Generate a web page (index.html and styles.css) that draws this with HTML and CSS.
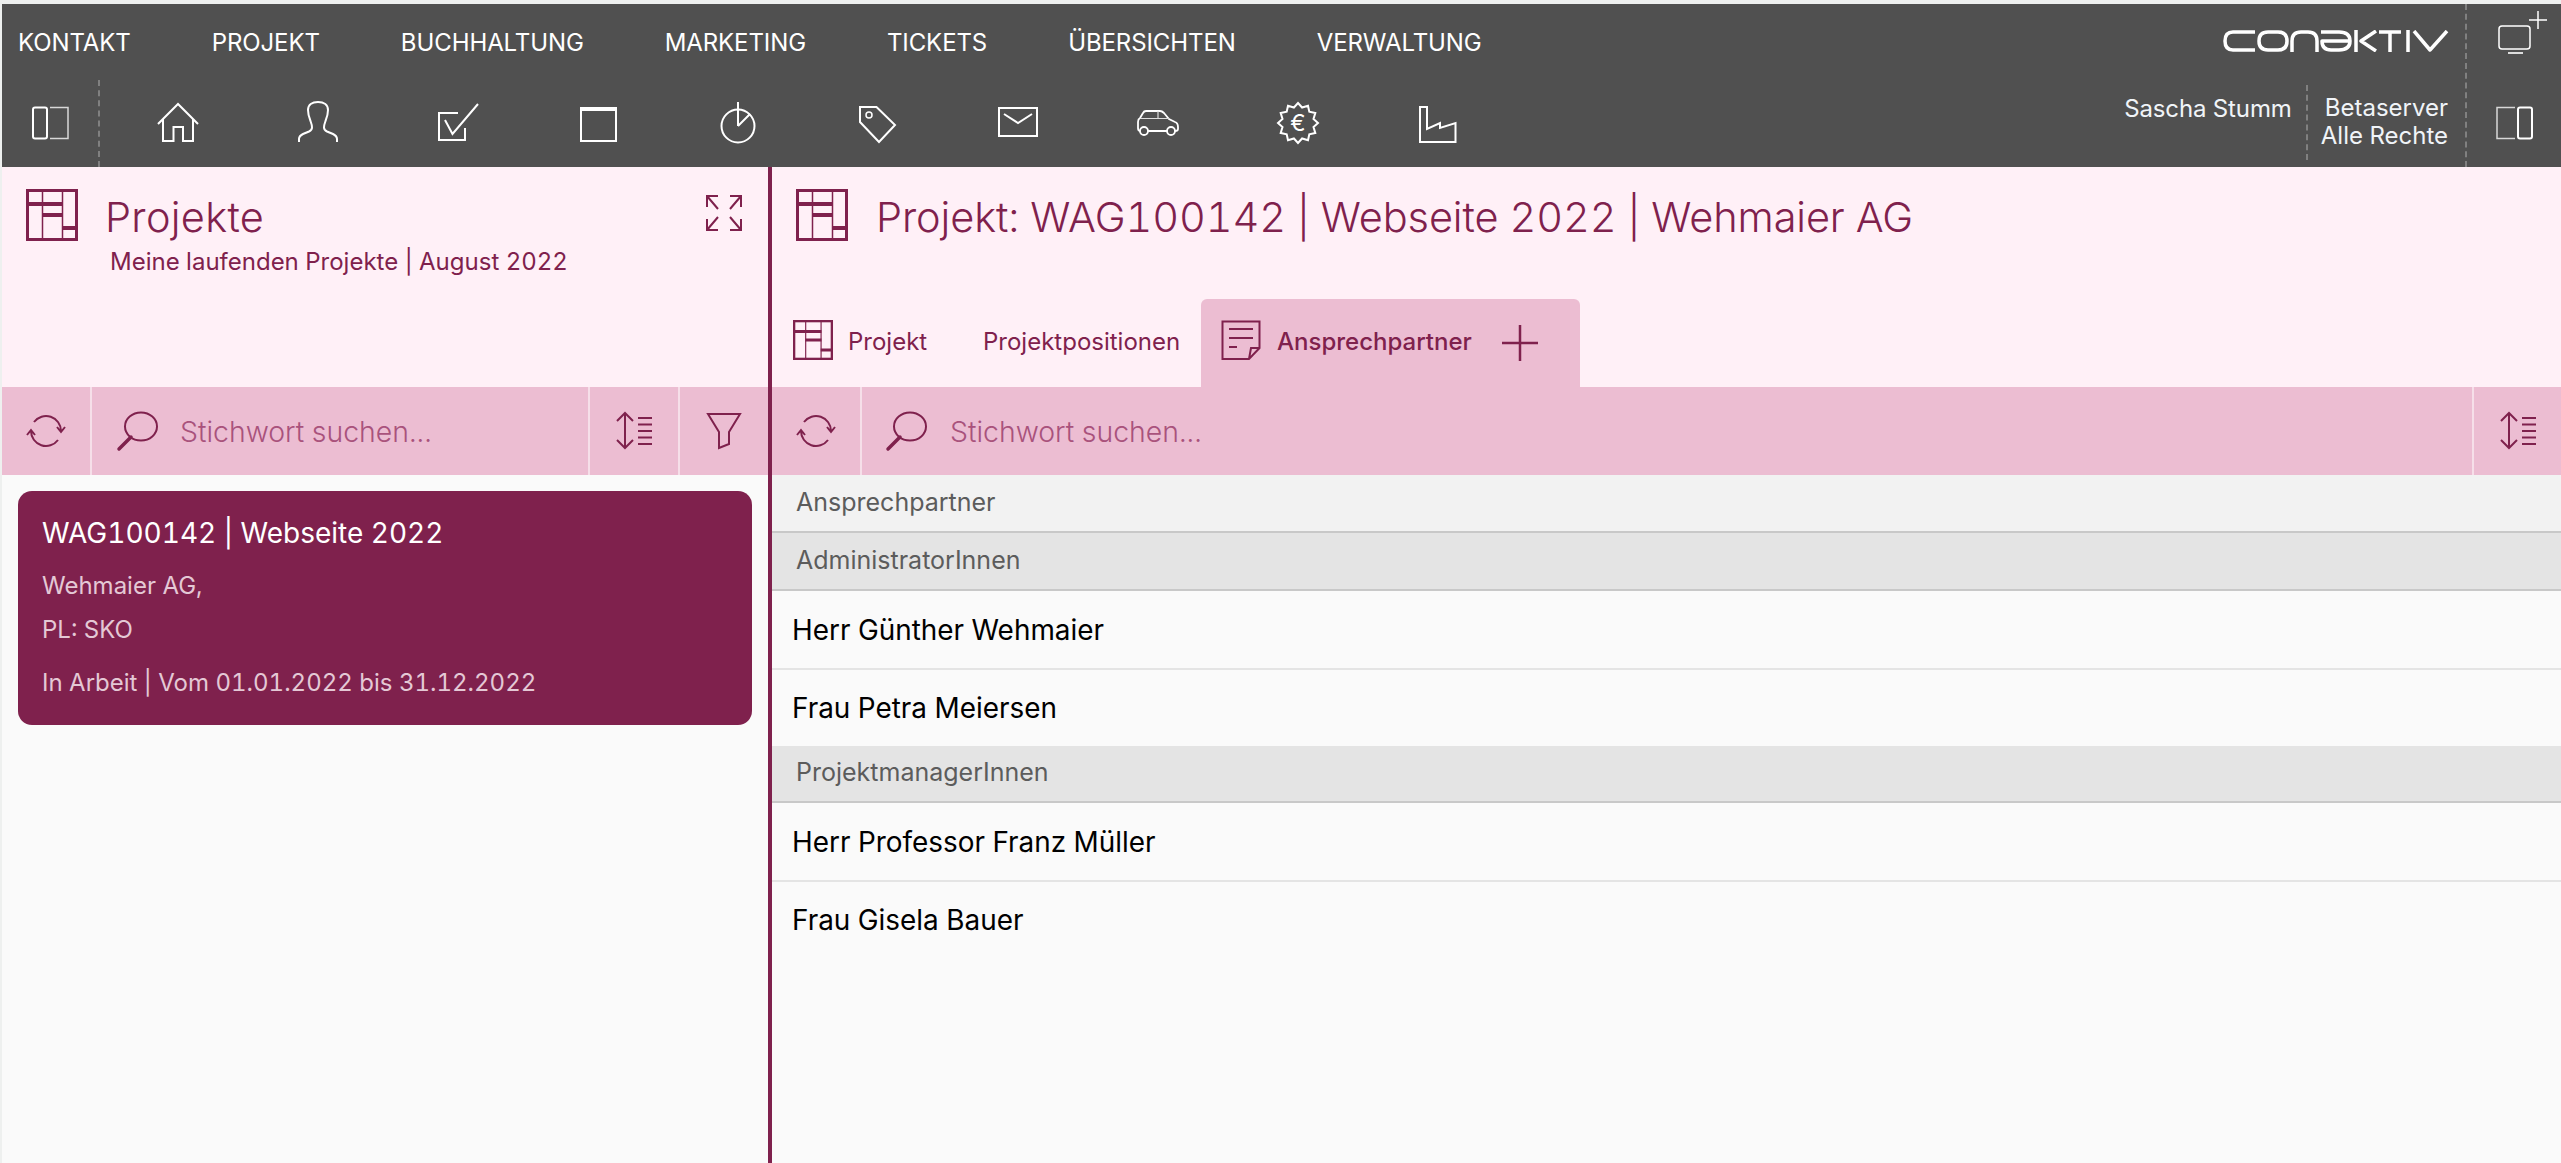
FILE: index.html
```html
<!DOCTYPE html>
<html lang="de">
<head>
<meta charset="utf-8">
<title>Conaktiv Projekte</title>
<link rel="stylesheet" href="styles.css">
</head>
<body>
<svg class="defs" width="0" height="0" aria-hidden="true">
  <symbol id="i-project" viewBox="0 0 52 52">
    <rect x="1.5" y="1.5" width="49" height="49" fill="none" stroke="currentColor" stroke-width="3"/>
    <path d="M16.500 1V51M36.500 1V51" fill="none" stroke="currentColor" stroke-width="1.500"/>
    <path d="M1 13h36v4H1zM16 24h21v4H16zM36 37h15v4H36z" fill="currentColor"/>
  </symbol>
  <symbol id="i-refresh" viewBox="0 0 40 40">
    <path d="M8 11A15 15 0 0 1 35 20M31 16l4 5 4-5M32 29A15 15 0 0 1 5 20M1 24l4-5 4 5" fill="none" stroke="currentColor" stroke-width="2"/>
  </symbol>
  <symbol id="i-search" viewBox="0 0 48 46">
    <ellipse cx="27" cy="18.500" rx="16" ry="14" fill="none" stroke="currentColor" stroke-width="2"/>
    <path d="M17 29L5 41" fill="none" stroke="currentColor" stroke-width="3.500" stroke-linecap="round"/>
  </symbol>
  <symbol id="i-sort" viewBox="0 0 44 42">
    <path d="M13 3V38M5 11l8-8 8 8M5 30l8 8 8-8" fill="none" stroke="currentColor" stroke-width="2"/>
    <path d="M26 8h14M26 14.500h14M26 21h14M26 27.500h14M26 34h14" fill="none" stroke="currentColor" stroke-width="2"/>
  </symbol>
</svg>
<div class="app">
  <header class="header">
    <div class="header-main">
      <nav class="nav">
        <span class="nav-item">KONTAKT</span>
        <span class="nav-item">PROJEKT</span>
        <span class="nav-item">BUCHHALTUNG</span>
        <span class="nav-item">MARKETING</span>
        <span class="nav-item">TICKETS</span>
        <span class="nav-item">ÜBERSICHTEN</span>
        <span class="nav-item">VERWALTUNG</span>
      </nav>
      <div class="tools">
        <div class="panel-cell">
          <svg class="ico48" viewBox="0 0 48 48"><rect x="7" y="9.500" width="14" height="31" rx="2" fill="none" stroke="#fff" stroke-width="2"/><path d="M24 9.500H42V40.500H24" fill="none" stroke="#d8d8d8" stroke-width="1.500"/></svg>
        </div>
        <div class="tool-cells">
          <span class="tool"><svg class="ico48" viewBox="0 0 48 48"><path d="M4 26L24 6L44 26M9 21V43H19.500V29H29V43H39V21" fill="none" stroke="#fff" stroke-width="2"/></svg></span>
          <span class="tool"><svg class="ico48" viewBox="0 0 48 48"><path d="M5 44V41Q5 38 9 36L15 33.500Q18 32 18 29.500Q18 27 16.500 23Q14 17 14 12C14 7 18 4 24 4C30 4 34 7 34 12Q34 17 31.500 23Q30 27 30 29.500Q30 32 33 33.500L39 36Q43 38 43 41V44" fill="none" stroke="#fff" stroke-width="2"/></svg></span>
          <span class="tool"><svg class="ico48" viewBox="0 0 48 48"><path d="M24 15H5V42H31V30M11 22L18.500 36L44 6" fill="none" stroke="#fff" stroke-width="2"/></svg></span>
          <span class="tool"><svg class="ico48" viewBox="0 0 48 48"><rect x="7" y="10" width="35" height="33" fill="none" stroke="#fff" stroke-width="2"/><path d="M6 9h37v4H6z" fill="#fff"/></svg></span>
          <span class="tool"><svg class="ico48" viewBox="0 0 48 48"><circle cx="24" cy="28" r="16.500" fill="none" stroke="#fff" stroke-width="2"/><path d="M24 11V4M24 28V11M24 28L36 16" fill="none" stroke="#fff" stroke-width="2"/></svg></span>
          <span class="tool"><svg class="ico48" viewBox="0 0 48 48"><path d="M6 9H22.500L41 27L25 44L6 24Z" fill="none" stroke="#fff" stroke-width="2"/><circle cx="15" cy="17" r="3" fill="none" stroke="#fff" stroke-width="1.500"/></svg></span>
          <span class="tool"><svg class="ico48" viewBox="0 0 48 48"><rect x="5" y="10" width="38" height="28" fill="none" stroke="#fff" stroke-width="2"/><path d="M10 16L24 25L38 16" fill="none" stroke="#fff" stroke-width="2"/></svg></span>
          <span class="tool"><svg class="ico48" viewBox="0 0 48 48"><path d="M6 33Q4 33 4 30V24Q4 21 6 20L9 15Q10 13 12 13H26Q28 13 30 15L35 21L41 24Q44 25 44 29V31Q44 33 41 33M14 33H33" fill="none" stroke="#fff" stroke-width="1.800"/><path d="M6 20.500H35M24 13V20.500" fill="none" stroke="#ddd" stroke-width="1.200"/><circle cx="10" cy="33" r="4" fill="none" stroke="#fff" stroke-width="1.800"/><circle cx="37" cy="33" r="4" fill="none" stroke="#fff" stroke-width="1.800"/></svg></span>
          <span class="tool"><svg class="ico48" viewBox="0 0 48 48"><path d="M24 5L28.100 9.500L34 7.700L35.300 13.700L41.300 15L39.500 20.900L44 25L39.500 29.100L41.300 35L35.300 36.300L34 42.300L28.100 40.500L24 45L19.900 40.500L14 42.300L12.700 36.300L6.700 35L8.500 29.100L4 25L8.500 20.900L6.700 15L12.700 13.700L14 7.700L19.900 9.500Z" fill="none" stroke="#fff" stroke-width="2"/><text class="euro" x="24" y="33" text-anchor="middle">€</text></svg></span>
          <span class="tool"><svg class="ico48" viewBox="0 0 48 48"><path d="M6 9H13V31L26 25V30L41.500 25V44H6Z" fill="none" stroke="#fff" stroke-width="2"/></svg></span>
        </div>
      </div>
    </div>
    <div class="header-user">
      <div class="logo-row">
        <svg class="logo" viewBox="0 0 226 22" role="img" aria-label="conaktiv"><path d="M32 2H10Q2 2 2 11Q2 20 10 20H32M45 2H55Q64 2 64 11Q64 20 55 20H45Q36 20 36 11Q36 2 45 2ZM69 22V11Q69 2 78 2H85Q94 2 94 11V22M98 2H116Q127 2 127 11Q127 20 116 20H108Q99 20 99 11H127M133 0V22M153 1L138 11L153 21M156 2H178M167 2V22M185 0V22M191 1L207 20L224 1" fill="none" stroke="#fff" stroke-width="3.500" stroke-linejoin="round"/></svg>
      </div>
      <div class="user-row">
        <div class="user-name">Sascha Stumm</div>
        <div class="user-server">Betaserver<br>Alle Rechte</div>
      </div>
    </div>
    <div class="header-side">
      <div class="side-top">
        <svg class="ico-monitor" viewBox="0 0 52 44"><rect x="4" y="16" width="31" height="23" rx="3" fill="none" stroke="#fff" stroke-width="1.500"/><path d="M13 43H28" fill="none" stroke="#ddd" stroke-width="2"/><path d="M43 1V19M34 10H52" fill="none" stroke="#fff" stroke-width="1.500"/></svg>
      </div>
      <div class="side-bottom">
        <svg class="ico48" viewBox="0 0 48 48"><path d="M24 9.500H6V40.500H24" fill="none" stroke="#d8d8d8" stroke-width="1.500"/><rect x="27" y="9.500" width="14" height="31" rx="2" fill="none" stroke="#fff" stroke-width="2"/></svg>
      </div>
    </div>
  </header>

  <main class="main">
    <section class="pane pane-left">
      <div class="pane-head head-left">
        <svg class="ico-project"><use href="#i-project"/></svg>
        <div class="head-text">
          <h1 class="title">Projekte</h1>
          <p class="subtitle">Meine laufenden Projekte | August 2022</p>
        </div>
        <svg class="ico-expand" viewBox="0 0 40 40"><path d="M3 14V3H14M3 3L14 16M26 3H37V14M37 3L26 16M3 26V37H14M3 37L14 24M37 26V37H26M37 37L26 24" fill="none" stroke="currentColor" stroke-width="2"/></svg>
      </div>
      <div class="toolbar">
        <div class="tb-cell tb-refresh"><svg class="ico-refresh"><use href="#i-refresh"/></svg></div>
        <div class="tb-cell tb-search tb-search-left"><svg class="ico-search"><use href="#i-search"/></svg><span class="placeholder">Stichwort suchen...</span></div>
        <div class="tb-cell tb-sort"><svg class="ico-sort"><use href="#i-sort"/></svg></div>
        <div class="tb-cell tb-filter"><svg class="ico-filter" viewBox="0 0 40 42"><path d="M4 4H36L25 22V34L15 38V22Z" fill="none" stroke="currentColor" stroke-width="2"/></svg></div>
      </div>
      <div class="pane-body">
        <article class="card">
          <div class="card-title">WAG100142 | Webseite 2022</div>
          <div class="card-line">Wehmaier AG,</div>
          <div class="card-line">PL: SKO</div>
          <div class="card-line card-status">In Arbeit | Vom 01.01.2022 bis 31.12.2022</div>
        </article>
      </div>
    </section>

    <section class="pane pane-right">
      <div class="pane-head head-right">
        <div class="head-row">
          <svg class="ico-project"><use href="#i-project"/></svg>
          <h1 class="title">Projekt: WAG100142 | Webseite 2022 | Wehmaier AG</h1>
        </div>
        <div class="tabs">
          <div class="tab tab-first"><svg class="ico-tab"><use href="#i-project"/></svg><span>Projekt</span></div>
          <div class="tab tab-second"><span>Projektpositionen</span></div>
          <div class="tab tab-active">
            <svg class="ico-tab" viewBox="0 0 40 40"><path d="M28 39H1.500V1.500H38.500V28ZM28 39L30 28H38.500M8 9H32M8 18H32M8 27H16" fill="none" stroke="currentColor" stroke-width="2"/></svg>
            <span>Ansprechpartner</span>
            <svg class="ico-plus" viewBox="0 0 36 36"><path d="M18 0V36M0 18H36" fill="none" stroke="currentColor" stroke-width="2.500"/></svg>
          </div>
        </div>
      </div>
      <div class="toolbar">
        <div class="tb-cell tb-refresh tb-refresh-right"><svg class="ico-refresh"><use href="#i-refresh"/></svg></div>
        <div class="tb-cell tb-search tb-search-right"><svg class="ico-search"><use href="#i-search"/></svg><span class="placeholder">Stichwort suchen...</span></div>
        <div class="tb-cell tb-sort-right"><svg class="ico-sort"><use href="#i-sort"/></svg></div>
      </div>
      <div class="list">
        <div class="list-section">Ansprechpartner</div>
        <div class="list-group">AdministratorInnen</div>
        <div class="list-row">Herr Günther Wehmaier</div>
        <div class="list-row list-row-end">Frau Petra Meiersen</div>
        <div class="list-group">ProjektmanagerInnen</div>
        <div class="list-row">Herr Professor Franz Müller</div>
        <div class="list-row list-row-end">Frau Gisela Bauer</div>
      </div>
    </section>
  </main>
</div>
</body>
</html>
```
FILE: styles.css
```css
* { box-sizing: border-box; }
html, body { margin: 0; padding: 0; height: 100%; overflow: hidden; }
body {
  font-family: Inter, "Liberation Sans", sans-serif;
  font-variant-numeric: tabular-nums;
  background: #eef0ef;
  color: #000;
}
.defs { position: absolute; }
.app {
  display: flex;
  flex-direction: column;
  height: 1163px;
  padding: 4px 0 0 2px;
}

/* header */
.header {
  display: flex;
  height: 163px;
  flex: none;
  background: #505050;
  color: #fff;
}
.header-main { flex: 1; display: flex; flex-direction: column; min-width: 0; }
.nav {
  height: 76px;
  display: flex;
  align-items: center;
  gap: 81px;
  padding-left: 16px;
  flex: none;
}
.nav-item { font-size: 24px; font-weight: 400; color: #fff; letter-spacing: -0.1px; }
.tools { display: flex; flex: 1; }
.panel-cell {
  width: 98px;
  display: flex;
  align-items: flex-start;
  padding: 18px 0 0 24px;
  border-right: 2px dashed #808080;
}
.tool-cells { display: flex; padding-left: 8px; }
.tool { width: 140px; display: flex; justify-content: center; padding-top: 18px; }
.ico48 { width: 48px; height: 48px; display: block; flex: none; }
.euro { font-family: Inter, sans-serif; font-size: 23px; fill: #fff; }

.header-user { width: 363px; flex: none; display: flex; flex-direction: column; align-items: flex-end; padding-right: 16px; }
.logo-row { height: 76px; display: flex; align-items: flex-start; padding-top: 26px; flex: none; }
.logo { width: 226px; height: 22px; display: block; }
.user-row { display: flex; font-size: 24px; line-height: 28px; color: #f0f4f8; }
.user-name { padding: 15px 14px 0 0; letter-spacing: -0.1px; }
.user-server {
  text-align: right;
  padding: 9px 1px 10px 13px;
  margin-top: 5px;
  margin-bottom: 7px;
  border-left: 2px dashed #808080;
}
.header-side {
  width: 96px;
  flex: none;
  border-left: 2px dashed #808080;
  display: flex;
  flex-direction: column;
}
.side-top { height: 76px; padding: 6px 0 0 28px; flex: none; }
.ico-monitor { width: 52px; height: 44px; display: block; }
.side-bottom { padding: 18px 0 0 24px; }

/* panes */
.main { display: flex; flex: 1; min-height: 0; }
.pane { display: flex; flex-direction: column; min-width: 0; }
.pane-left { width: 766px; flex: none; }
.pane-right { flex: 1; border-left: 4px solid #7f214d; }
.pane-head { height: 220px; flex: none; background: #fff0f7; color: #7f214d; }
.head-left { display: flex; padding: 22px 24px 0 24px; }
.ico-project { width: 52px; height: 52px; flex: none; display: block; color: #7f214d; }
.head-text { flex: 1; padding-left: 27px; }
.title { margin: 0; font-size: 41.5px; line-height: 50px; font-weight: 300; color: #7f214d; }
.subtitle { margin: 3px 0 0; font-size: 24px; line-height: 34px; font-weight: 400; padding: 0 0 0 5px; color: #7f214d; }
.head-left .title { padding-top: 3px; letter-spacing: 0.3px; }
.ico-expand { width: 40px; height: 40px; flex: none; margin-top: 4px; display: block; }

.head-right { display: flex; flex-direction: column; justify-content: space-between; }
.head-row { display: flex; align-items: flex-start; padding: 22px 0 0 24px; gap: 28px; }
.head-row .title { padding-top: 3px; letter-spacing: -0.1px; }
.tabs { display: flex; align-items: stretch; height: 88px; padding-left: 21px; }
.tab { display: flex; align-items: center; font-size: 24px; font-weight: 400; color: #7f214d; padding-bottom: 6px; }
.tab span { margin-top: 2px; }
.tab-first { width: 190px; gap: 15px; }
.tab-second { width: 218px; }
.ico-tab { width: 40px; height: 40px; flex: none; display: block; color: #7f214d; }
.tab-active {
  width: 379px;
  background: #ecbdd2;
  border-radius: 6px 6px 0 0;
  padding-left: 20px;
  gap: 16px;
  font-weight: 500;
}
.ico-plus { width: 36px; height: 36px; flex: none; margin-left: 14px; display: block; margin-top: 6px; }

/* toolbar */
.toolbar { height: 88px; flex: none; display: flex; background: #ecbdd2; color: #7f214d; }
.tb-cell { display: flex; align-items: center; flex: none; }
.tb-refresh { width: 90px; padding-left: 24px; border-right: 2px solid #f6dfe9; }
.ico-refresh { width: 40px; height: 40px; display: block; }
.tb-search { padding-left: 22px; border-right: 2px solid #f6dfe9; }
.tb-search-left { width: 498px; }
.tb-search-right { flex: 1; padding-left: 21px; }
.ico-search { width: 48px; height: 46px; display: block; flex: none; }
.placeholder { font-size: 28.4px; font-weight: 300; color: #a9527c; margin-left: 18px; }
.tb-search-right .placeholder { margin-left: 19px; }
.tb-sort { width: 90px; padding-left: 22px; border-right: 2px solid #f6dfe9; }
.ico-sort { width: 44px; height: 42px; display: block; }
.tb-filter { flex: 1; padding-left: 24px; }
.ico-filter { width: 40px; height: 42px; display: block; }
.tb-sort-right { width: 87px; padding-left: 22px; }

/* left body */
.pane-body { flex: 1; background: #fafafa; padding: 16px 16px 0 16px; }
.card {
  height: 234px;
  background: #7f214d;
  border-radius: 14px;
  padding: 24px 24px 0 24px;
  color: #e4c8d5;
}
.card-title { font-size: 28px; line-height: 36px; color: #fff; margin-bottom: 18px; }
.card-line { font-size: 24px; line-height: 34px; margin-bottom: 10px; }
.card-status { margin-top: 19px; }

/* list */
.list { flex: 1; background: #fafafa; }
.list-section, .list-group {
  font-size: 25px;
  color: #5c5c5c;
  padding: 0 0 3px 24px;
  display: flex;
  align-items: center;
  height: 58px;
  border-bottom: 2px solid #c8c8c8;
}
.list-section { background: #f2f2f2; }
.list-group { background: #e4e4e4; }
.list-row-end + .list-group { height: 57px; }
.list-row {
  height: 79px;
  font-size: 27.9px;
  color: #000;
  padding-left: 20px;
  display: flex;
  align-items: center;
  border-bottom: 2px solid #e4e4e4;
}
.list-row-end { height: 76px; border-bottom: 0; }
```
